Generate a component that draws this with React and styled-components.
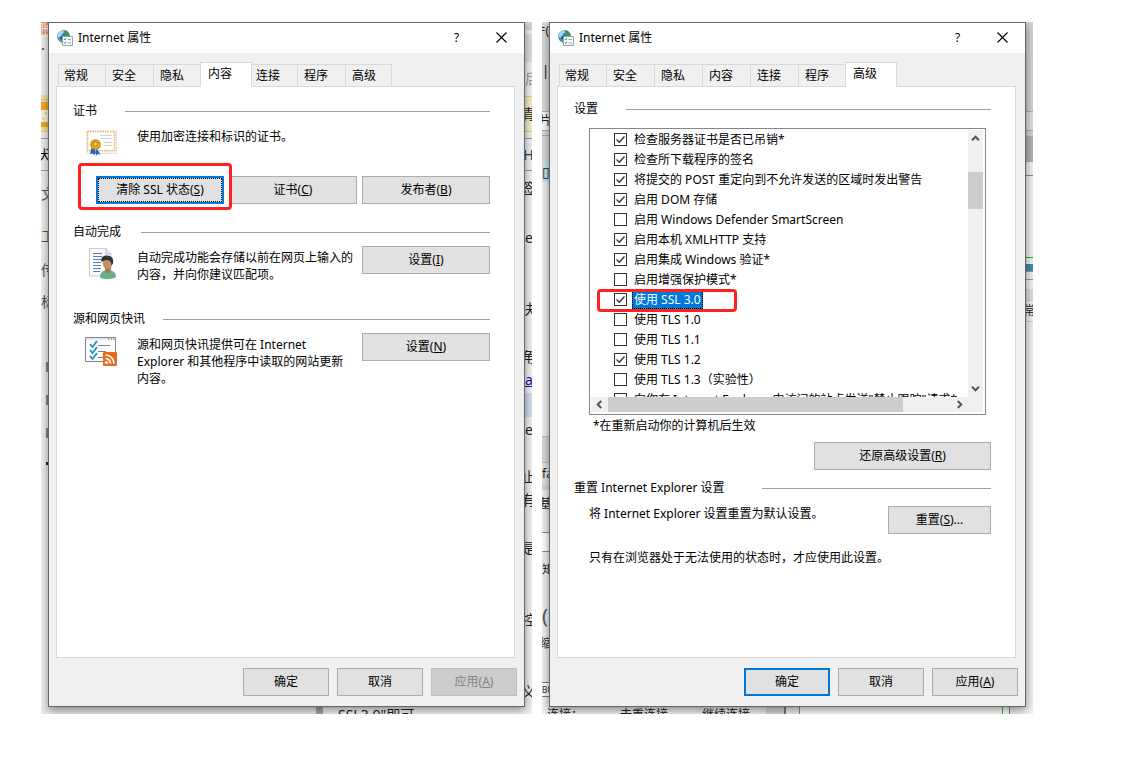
import React, { useState } from 'react';
import styled, { createGlobalStyle, css } from 'styled-components';

const GlobalStyle = createGlobalStyle`
  *, *::before, *::after {
    box-sizing: border-box;
  }
  body {
    background: #fff;
    color: #000;
    font-family: 'Noto Sans', 'Noto Sans CJK SC', sans-serif;
    font-size: 12px;
    line-height: 16px;
    margin: 0;
  }
  button, input {
    color: inherit;
    font: inherit;
    margin: 0;
  }
  h1, h2, p {
    font: inherit;
    margin: 0;
  }
  u {
    text-underline-offset: 1px;
  }
`;

const Page = styled.main`
  display: grid;
  gap: 10px;
  grid-template-columns: 1fr 1fr;
  min-height: 100vh;
  padding: 22px 92px 53px 41px;
`;

/* a dialog framed by the edges of the window that is open behind it */
const Desktop = styled.div`
  background: #f1f1f1;
  display: grid;
  grid-template-areas: 'left dialog right' 'bottom bottom bottom';
  grid-template-columns: 7px minmax(0, 1fr) 7px;
  grid-template-rows: 1fr 7px;
  overflow: hidden;
`;

const Edge = styled.div`
  display: flex;
  flex-direction: ${(p) => (p.$area === 'bottom' ? 'row' : 'column')};
  grid-area: ${(p) => p.$area};
  min-height: 0;
  overflow: hidden;
`;

const Piece = styled.div`
  align-items: ${(p) => (p.$row ? 'flex-start' : 'center')};
  background: ${(p) => p.$bg || 'none'};
  color: ${(p) => p.$color || '#222'};
  display: flex;
  flex: 0 0 ${(p) => p.$size}px;
  font-size: ${(p) => p.$font || 14}px;
  justify-content: ${(p) => p.$align || 'flex-start'};
  line-height: 16px;
  min-height: 0;
  min-width: 0;
  white-space: nowrap;
  ${(p) => p.$line && css`border: solid ${p.$line}; border-width: 1px 0;`}
  ${(p) => p.$narrow && css`align-self: flex-end; width: 2px;`}
`;

const Dialog = styled.section`
  background: #f0f0f0;
  border: 1px solid #666;
  box-shadow: 0 3px 9px rgba(0, 0, 0, 0.45);
  display: flex;
  flex-direction: column;
  grid-area: dialog;
  position: relative;
`;

const TitleBar = styled.header`
  align-items: center;
  background: #fff;
  display: flex;
  height: 30px;
  padding-left: 8px;
  h1 {
    flex: 1;
    margin-left: 5px;
  }
`;

const TitleButton = styled.button`
  align-items: center;
  background: none;
  border: 0;
  display: flex;
  height: 30px;
  justify-content: center;
  padding: 0 0 1px;
  width: 45px;
`;

const Tabs = styled.div`
  align-items: flex-end;
  display: flex;
  height: 33px;
  padding-left: 9px;
`;

const Tab = styled.button`
  background: #f0f0f0;
  border: 1px solid #d9d9d9;
  border-bottom: 0;
  border-right: 0;
  height: 22px;
  padding: 0 0 0 6px;
  text-align: left;
  width: 48px;
  &:first-child {
    padding-left: 5px;
    width: 47px;
  }
  &:last-child {
    border-right: 1px solid #d9d9d9;
    width: 47px;
  }
  ${(p) =>
    p.$active &&
    css`
      &&& {
        background: #fff;
        border-right: 1px solid #d9d9d9;
        height: 25px;
        margin: 0 -3px -1px -1px;
        padding: 0 0 2px 7px;
        position: relative;
        width: 52px;
        z-index: 1;
      }
    `}
`;

const Pane = styled.div`
  background: #fff;
  border: 1px solid #d9d9d9;
  flex: 1;
  margin: 0 9px 0 7px;
  padding: ${(p) => p.$top}px 24px 0 16px;
`;

const Footer = styled.footer`
  display: flex;
  gap: 8px;
  justify-content: flex-end;
  padding: 10px 7px;
`;

const Button = styled.button`
  background: #e1e1e1;
  border: ${(p) => (p.$primary ? '2px solid #0078d7' : '1px solid #adadad')};
  flex: none;
  height: 28px;
  outline: ${(p) => (p.$focused ? '1px dotted #000' : 'none')};
  outline-offset: -3px;
  padding: 0;
  width: ${(p) => p.$width}px;
  &:disabled {
    background: #ccc;
    border-color: #bfbfbf;
    color: #838383;
  }
`;

const Heading = styled.div`
  align-items: center;
  display: grid;
  grid-template-columns: ${(p) => p.$label}px 1fr;
  hr {
    border: 0;
    border-top: 1px solid #a0a0a0;
    margin: 0;
    width: 100%;
  }
  h2 {
    white-space: nowrap;
  }
`;

const Feature = styled.div`
  align-items: flex-start;
  display: flex;
  margin: 6px 0 0 12px;
  min-height: ${(p) => p.$height}px;
  svg {
    flex: none;
    margin: 2px 19px 0 0;
  }
  p {
    flex: 1;
    line-height: 17px;
    padding-top: 3px;
    white-space: nowrap;
  }
`;

const ButtonRow = styled.div`
  display: flex;
  gap: 5px;
  justify-content: flex-end;
  margin: 14px 0 20px;
`;

/* red frame drawn over the control it points out */
const Marked = styled.div`
  display: inline-flex;
  position: relative;
  &::after {
    border: 3px solid #ff2020;
    border-radius: 4px;
    content: '';
    inset: ${(p) => p.$inset};
    pointer-events: none;
    position: absolute;
    z-index: 2;
  }
`;

const ListBox = styled.div`
  border: 1px solid #828790;
  display: grid;
  grid-template-columns: 1fr 15px;
  grid-template-rows: 267px 15px;
  margin: 11px 5px 0 15px;
  padding: 1px 2px 2px 1px;
`;

const Options = styled.ul`
  list-style: none;
  margin: 0;
  overflow: hidden;
  padding: 0 0 0 23px;
  li {
    display: flex;
    height: 20px;
  }
`;

const Option = styled.label`
  align-items: center;
  display: flex;
  gap: 5px;
  white-space: nowrap;
  > span:last-child {
    background: ${(p) => (p.$selected ? '#0078d7' : 'none')};
    color: ${(p) => (p.$selected ? '#fff' : 'inherit')};
    line-height: 18px;
    outline: ${(p) => (p.$selected ? '1px dotted #000' : 'none')};
    outline-offset: -1px;
    padding: 0 2px;
  }
`;

const Box = styled.span`
  display: grid;
  padding-bottom: 1px;
  input {
    appearance: none;
    background: #fff;
    border: 1px solid #333;
    grid-area: 1 / 1;
    height: 13px;
    width: 13px;
  }
  svg {
    display: none;
    grid-area: 1 / 1;
    pointer-events: none;
  }
  input:checked + svg {
    display: block;
  }
`;

const ScrollBar = styled.div`
  background: #f0f0f0;
  display: flex;
  flex-direction: ${(p) => (p.$vertical ? 'column' : 'row')};
`;

const ScrollButton = styled.button`
  align-items: center;
  background: none;
  border: 0;
  display: flex;
  flex: none;
  height: ${(p) => (p.$flat ? 15 : 17)}px;
  justify-content: center;
  padding: 0;
  width: ${(p) => (p.$flat ? 17 : 15)}px;
  svg {
    transform: rotate(${(p) => p.$turn}deg);
  }
`;

const Track = styled.div`
  display: flex;
  flex: 1;
  flex-direction: inherit;
`;

const Thumb = styled.div`
  background: #cdcdcd;
  flex: 0 0 ${(p) => p.$size};
  margin-top: ${(p) => p.$offset || 0}px;
`;

const Note = styled.p`
  margin: 3px 0 8px 19px;
`;

const Right = styled.div`
  display: flex;
  justify-content: flex-end;
  margin-bottom: 10px;
`;

const ResetRow = styled.div`
  display: flex;
  justify-content: space-between;
  margin: 10px 0 16px 15px;
`;

const Hint = styled.p`
  margin-left: 15px;
`;

function InternetIcon() {
  return (
    <svg width="16" height="16" viewBox="0 0 16 16" aria-hidden="true">
      <circle cx="6.5" cy="6.5" r="6.3" fill="#3a80bf" />
      <path d="M.6 6C1 3 3 .8 6 .4l1.500 1.800-2 1.300L4 6.500 2 8z" fill="#a5dcf0" />
      <path d="M7 .3c3 0 5.300 2 5.800 5.200L10.500 6 8 5.500 7 4l2-1.500z" fill="#3c9a3a" />
      <path d="M4 5.500l2 1-.5 3L3 9z" fill="#1b4f9c" />
      <path d="M1.500 8.500l2.500.5 1 3.500C3.500 12.300 2 11 1.500 8.500z" fill="#59b04c" />
      <path d="M5.500 6.500h10v9h-10z" fill="#f8fafb" stroke="#98a5ae" />
      <path d="M7 9l.8 1L9 8.300M7 12.500l.8 1L9 11.800" fill="none" stroke="#2489bd" />
      <path d="M10.500 9.500h3.500M10.500 13h3.500" stroke="#9aa5ad" />
    </svg>
  );
}

function CertificateIcon() {
  return (
    <svg width="33" height="32" viewBox="0 -2 33 32" aria-hidden="true">
      <path d="M1 1h31v24H1z" fill="#e6e3dc" />
      <path d="M1 1h30v23H1z" fill="#fbf3e4" />
      <path d="M2.500 2.500h27v19h-27z" fill="#fffefb" stroke="#dcb27a" strokeWidth="1.500" strokeDasharray="1.500 1" />
      <path d="M15 6.500h12M15 9.500h12M19 13.500h8M19 16.500h8" stroke="#cfd0d6" />
      <path d="M6.500 19l-1.500 6 3-.5 1.500 2L11.500 20zM11.500 19l4 6.500-2.500-.5-2 1.500-1-7z" fill="#2563d0" />
      <circle cx="10.500" cy="15.500" r="5.300" fill="#c58a0d" />
      <circle cx="10.500" cy="15.500" r="3.800" fill="#e6b02a" />
      <circle cx="10.500" cy="15" r="2" fill="#fbe184" stroke="#a8730b" />
    </svg>
  );
}

function AutoCompleteIcon() {
  return (
    <svg width="33" height="32" viewBox="0 0 33 32" aria-hidden="true">
      <path d="M4.500.5H21l5 5.500v22H4.500z" fill="#fafafa" stroke="#c9ccd1" />
      <path d="M21 .5V6h5" fill="#e6e8ec" stroke="#b9bdc4" />
      <path d="M8 5.500h9M8 8.500h9M8 11.500h9M8 14.500h8M8 17.500h8M8 20.500h8M8 23.500h7" stroke="#4f83c4" />
      <path d="M15 29.500c0-5 3-7.500 8-7.500 4 0 8 2 8 7-3 2.500-13 3-16 .5z" fill="#69b08a" />
      <path d="M20 19h6l-1 5-2 1.500-3-2.500z" fill="#a2764a" />
      <ellipse cx="22.500" cy="15" rx="4.800" ry="6" fill="#bd9066" />
      <path d="M16.500 14c-1-5 2-7 6-6.500 4 .3 6.500 3 5.500 8l-1.500 2c0-3-1-5-4-5.500-2 0-4 .5-6 2z" fill="#33302d" />
    </svg>
  );
}

function FeedIcon() {
  return (
    <svg width="33" height="32" viewBox="0 0 33 32" aria-hidden="true">
      <path d="M.5 2.500h30v24H.5z" fill="#fbfcfd" stroke="#7f8992" />
      <path d="M1 3h29v2H1z" fill="#e3e7ec" />
      <path d="M23 4h1M26 4h1M28.500 4h1" stroke="#59636c" />
      <path d="M5 9l2.500 3L12 6M5 15l2.500 3L12 12M5 21l2.500 3L12 18" fill="none" stroke="#2a8fc4" strokeWidth="1.800" />
      <path d="M13 10.500h12M13 16.500h8M13 22.500h5" stroke="#7d8396" />
      <rect x="18" y="17" width="14" height="14" rx="1" fill="#ea6a1c" />
      <circle cx="21.500" cy="27.500" r="1.600" fill="#fff" />
      <path d="M20.500 23.500a5 5 0 015 5M20.500 20a8.500 8.500 0 018.500 8.500" fill="none" stroke="#fff" strokeWidth="1.700" />
    </svg>
  );
}

function ScrollArrow({ label, turn, flat }) {
  return (
    <ScrollButton type="button" aria-label={label} $turn={turn} $flat={flat}>
      <svg width="9" height="9" viewBox="0 0 9 9">
        <path d="M1 6.200L4.500 2.700 8 6.200" fill="none" stroke="#555" strokeWidth="2" />
      </svg>
    </ScrollButton>
  );
}

const TAB_NAMES = ['常规', '安全', '隐私', '内容', '连接', '程序', '高级'];

const OPTIONS = [
  { text: '检查服务器证书是否已吊销*', on: true },
  { text: '检查所下载程序的签名', on: true },
  { text: '将提交的 POST 重定向到不允许发送的区域时发出警告', on: true },
  { text: '启用 DOM 存储', on: true },
  { text: '启用 Windows Defender SmartScreen', on: false },
  { text: '启用本机 XMLHTTP 支持', on: true },
  { text: '启用集成 Windows 验证*', on: true },
  { text: '启用增强保护模式*', on: false },
  { text: '使用 SSL 3.0', on: true, selected: true },
  { text: '使用 TLS 1.0', on: false },
  { text: '使用 TLS 1.1', on: false },
  { text: '使用 TLS 1.2', on: true },
  { text: '使用 TLS 1.3（实验性）', on: false },
  { text: '向你在 Internet Explorer 中访问的站点发送"禁止跟踪"请求*', on: false },
];

/* the article page behind the first dialog */
const ARTICLE = {
  left: [
    { size: 13, bg: '#e8825c', text: '账', color: '#fff', align: 'center' },
    { size: 12 },
    { size: 3, text: '·', color: '#333' },
    { size: 45 },
    { size: 4, bg: '#f0e3a3' },
    { size: 1, bg: '#e3cf80' },
    { size: 2, bg: '#f0e3a3' },
    { size: 8, bg: '#f2ab26' },
    { size: 12, bg: '#faf6e6', text: '∴', color: '#f2ab26', font: 10 },
    { size: 5, bg: '#f2ab26' },
    { size: 4, bg: '#f0e3a3' },
    { size: 1, bg: '#e3cf80' },
    { size: 6 },
    { size: 1, bg: '#999' },
    { size: 31, text: '犬', color: '#111', align: 'center' },
    { size: 1, bg: '#999' },
    { size: 46, text: '文', color: '#555' },
    { size: 38, text: '工', color: '#555' },
    { size: 30, text: '传', color: '#555' },
    { size: 34, text: '标', color: '#555' },
    { size: 43 },
    { size: 10, bg: '#888', narrow: true },
    { size: 23 },
    { size: 10, bg: '#888', narrow: true },
    { size: 23 },
    { size: 10, bg: '#888', narrow: true },
    { size: 24 },
    { size: 3, bg: '#222', narrow: true },
  ],
  right: [
    { size: 8, bg: '#d2d2d2' },
    { size: 4 },
    { size: 28, bg: '#dedede' },
    { size: 34, text: '后', color: '#999' },
    { size: 36, bg: '#f5eecb', line: '#e3cf80', text: '青', align: 'center' },
    { size: 6 },
    { size: 1, bg: '#999' },
    { size: 31, text: 'H', color: '#246', align: 'center' },
    { size: 1, bg: '#999' },
    { size: 34, text: '签', align: 'center' },
    { size: 66, text: 'e' },
    { size: 76, text: '决', align: 'center' },
    { size: 20, text: '角', align: 'center' },
    { size: 26, text: <u>a</u>, color: '#1111b0' },
    { size: 24, bg: '#d3deee' },
    { size: 26, text: 'e' },
    { size: 23 },
    { size: 22, text: '止', align: 'center' },
    { size: 24, text: '有', align: 'center' },
    { size: 16 },
    { size: 40, text: '是', align: 'center' },
    { size: 30 },
    { size: 44, text: '控', align: 'center' },
    { size: 35 },
    { size: 30, text: '义', align: 'center' },
  ],
  bottom: [
    { size: 275, bg: '#e9e9e9' },
    { size: 7, bg: '#a5a5a5' },
    { size: 15 },
    { size: 180, text: 'SSL3.0"即可' },
  ],
};

/* the editor window behind the second dialog */
const EDITOR = {
  left: [
    { size: 18, bg: '#dadada', text: '件(', font: 12, align: 'flex-end' },
    { size: 22, bg: '#dadada' },
    { size: 17, bg: '#dadada', text: '|', align: 'center' },
    { size: 32, bg: '#dadada' },
    { size: 20, bg: '#fafafa', line: '#aaa', text: '片', font: 12, align: 'center' },
    { size: 4, bg: '#dadada' },
    { size: 1, bg: '#aaa' },
    { size: 26, bg: '#dadada' },
    { size: 20, bg: '#c5e8f5', text: '▯', align: 'center' },
    { size: 254 },
    { size: 27, bg: '#d8d8d8', line: '#bbb' },
    { size: 22, bg: '#e4e4e4', text: 'fa', font: 12 },
    { size: 5, bg: '#d8d8d8' },
    { size: 28, text: '基', font: 12, align: 'center' },
    { size: 14 },
    { size: 20, bg: '#fff', line: '#888' },
    { size: 36, text: '矩', font: 12 },
    { size: 16 },
    { size: 24, text: '(', font: 20, color: '#555' },
    { size: 32, text: '缩', font: 12, color: '#234', align: 'center' },
    { size: 22 },
    { size: 15, bg: '#fff', line: '#777', text: 'BU', font: 8 },
  ],
  right: [
    { size: 89, bg: '#d3d3d3' },
    { size: 20, bg: '#dedede', line: '#aaa' },
    { size: 5, bg: '#d3d3d3' },
    { size: 26, bg: '#b3b3b3' },
    { size: 13 },
    { size: 1, bg: '#888' },
    { size: 81 },
    { size: 1, bg: '#20b820' },
    { size: 6 },
    { size: 7, bg: '#4387ae' },
    { size: 9, bg: '#eee', line: '#8f9faa' },
    { size: 9 },
    { size: 11, bg: '#dedede' },
    { size: 22, line: '#ccc', text: '常', font: 12, align: 'center' },
  ],
  bottom: [
    { size: 5 },
    { size: 73, text: '连接：', font: 12 },
    { size: 82, text: '去重连接', font: 12 },
    { size: 64, text: '继续连接', font: 12 },
    { size: 18, bg: '#d6d6d6' },
    { size: 2, bg: '#777' },
    { size: 13 },
    { size: 1, bg: '#888' },
    { size: 202, bg: '#fff' },
    { size: 1, bg: '#20c820' },
    { size: 6, bg: '#fff' },
    { size: 1, bg: '#777' },
  ],
};

function Backdrop({ edges }) {
  return Object.entries(edges).map(([area, pieces]) => (
    <Edge key={area} $area={area} aria-hidden="true">
      {pieces.map((piece, i) => (
        <Piece
          key={i}
          $row={area === 'bottom'}
          $size={piece.size}
          $bg={piece.bg}
          $line={piece.line}
          $color={piece.color}
          $font={piece.font}
          $align={piece.align}
          $narrow={piece.narrow}
        >
          {piece.text}
        </Piece>
      ))}
    </Edge>
  ));
}

function OptionRow({ option }) {
  const [on, setOn] = useState(option.on);
  const row = (
    <Option $selected={option.selected}>
      <Box>
        <input type="checkbox" checked={on} onChange={() => setOn(!on)} />
        <svg width="13" height="13" viewBox="0 0 13 13">
          <path d="M2.500 6.500l2.800 2.800 5.200-5.800" fill="none" stroke="#333" strokeWidth="1.300" />
        </svg>
      </Box>
      <span>{option.text}</span>
    </Option>
  );
  return <li>{option.selected ? <Marked $inset="-1px -34px -2px -17px">{row}</Marked> : row}</li>;
}

function PropertiesDialog({ active, applyDisabled, okPrimary, children }) {
  return (
    <Dialog>
      <TitleBar>
        <InternetIcon />
        <h1>Internet 属性</h1>
        <TitleButton type="button">?</TitleButton>
        <TitleButton type="button" aria-label="关闭">
          <svg width="11" height="11" viewBox="0 0 11 11">
            <path d="M.5.5l10 10M10.500.5l-10 10" stroke="#000" strokeWidth="1.100" />
          </svg>
        </TitleButton>
      </TitleBar>
      <Tabs role="tablist">
        {TAB_NAMES.map((name) => (
          <Tab key={name} type="button" role="tab" aria-selected={name === active} $active={name === active}>
            {name}
          </Tab>
        ))}
      </Tabs>
      {children}
      <Footer>
        <Button type="button" $width={86} $primary={okPrimary}>确定</Button>
        <Button type="button" $width={86}>取消</Button>
        <Button type="button" $width={86} disabled={applyDisabled}>
          应用(<u>A</u>)
        </Button>
      </Footer>
    </Dialog>
  );
}

function SectionHeading({ label, children }) {
  return (
    <Heading $label={label}>
      <h2>{children}</h2>
      <hr />
    </Heading>
  );
}

function ContentPane() {
  return (
    <Pane $top={16}>
      <SectionHeading label={52}>证书</SectionHeading>
      <Feature $height={37}>
        <CertificateIcon />
        <p>使用加密连接和标识的证书。</p>
      </Feature>
      <ButtonRow>
        <Marked $inset="-13px -8px -6px -18px">
          <Button type="button" $width={128} $primary $focused>
            清除 SSL 状态(<u>S</u>)
          </Button>
        </Marked>
        <Button type="button" $width={128}>
          证书(<u>C</u>)
        </Button>
        <Button type="button" $width={128}>
          发布者(<u>B</u>)
        </Button>
      </ButtonRow>
      <SectionHeading label={68}>自动完成</SectionHeading>
      <Feature $height={65}>
        <AutoCompleteIcon />
        <p>
          自动完成功能会存储以前在网页上输入的
          <br />
          内容，并向你建议匹配项。
        </p>
        <Button type="button" $width={128}>
          设置(<u>I</u>)
        </Button>
      </Feature>
      <SectionHeading label={90}>源和网页快讯</SectionHeading>
      <Feature $height={65}>
        <FeedIcon />
        <p>
          源和网页快讯提供可在 Internet
          <br />
          Explorer 和其他程序中读取的网站更新
          <br />
          内容。
        </p>
        <Button type="button" $width={128}>
          设置(<u>N</u>)
        </Button>
      </Feature>
    </Pane>
  );
}

function AdvancedPane() {
  return (
    <Pane $top={14}>
      <SectionHeading label={52}>设置</SectionHeading>
      <ListBox>
        <Options>
          {OPTIONS.map((option) => (
            <OptionRow key={option.text} option={option} />
          ))}
        </Options>
        <ScrollBar $vertical>
          <ScrollArrow label="向上" turn={0} />
          <Track>
            <Thumb $size="37px" $offset={25} />
          </Track>
          <ScrollArrow label="向下" turn={180} />
        </ScrollBar>
        <ScrollBar>
          <ScrollArrow label="向左" turn={-90} flat />
          <Track>
            <Thumb $size="86%" />
          </Track>
          <ScrollArrow label="向右" turn={90} flat />
        </ScrollBar>
        <ScrollBar />
      </ListBox>
      <Note>*在重新启动你的计算机后生效</Note>
      <Right>
        <Button type="button" $width={177}>
          还原高级设置(<u>R</u>)
        </Button>
      </Right>
      <SectionHeading label={188}>重置 Internet Explorer 设置</SectionHeading>
      <ResetRow>
        <p>将 Internet Explorer 设置重置为默认设置。</p>
        <Button type="button" $width={103}>
          重置(<u>S</u>)...
        </Button>
      </ResetRow>
      <Hint>只有在浏览器处于无法使用的状态时，才应使用此设置。</Hint>
    </Pane>
  );
}

export default function App() {
  return (
    <>
      <GlobalStyle />
      <Page>
        <Desktop>
          <Backdrop edges={ARTICLE} />
          <PropertiesDialog active="内容" applyDisabled>
            <ContentPane />
          </PropertiesDialog>
        </Desktop>
        <Desktop>
          <Backdrop edges={EDITOR} />
          <PropertiesDialog active="高级" okPrimary>
            <AdvancedPane />
          </PropertiesDialog>
        </Desktop>
      </Page>
    </>
  );
}
